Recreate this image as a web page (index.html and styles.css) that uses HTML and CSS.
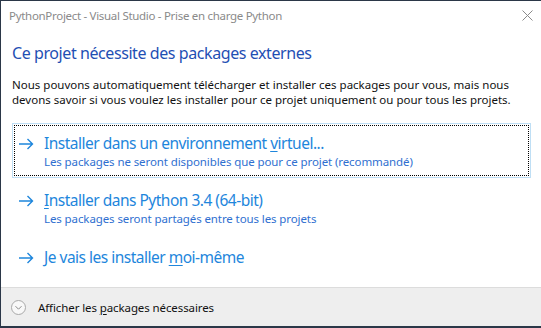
FILE: index.html
```html
<!DOCTYPE html>
<html lang="fr">
<head>
    <meta charset="UTF-8">
    <meta name="viewport" content="width=device-width, initial-scale=1.0">
    <link rel="stylesheet" href="styles.css">
</head>
<body>
    <div class="window">
        <!-- barre de titre -->
        <header class="titlebar">
            <span class="title">PythonProject - Visual Studio - Prise en charge Python</span>
            <button class="close" aria-label="Fermer">
                <svg width="11" height="11" viewBox="0 0 11 11"><path d="M0.5 0.5 L10.5 10.5 M10.5 0.5 L0.5 10.5" stroke="#8a8a8a" stroke-width="1" fill="none"/></svg>
            </button>
        </header>

        <!-- contenu principal -->
        <main class="content">
            <h1 class="heading">Ce projet nécessite des packages externes</h1>
            <p class="intro">Nous pouvons automatiquement télécharger et installer ces packages pour vous, mais nous devons savoir si vous voulez les installer pour ce projet uniquement ou pour tous les projets.</p>

            <ul class="options">
                <li class="option focused">
                    <span class="arrow">
                        <svg width="15" height="12" viewBox="0 0 15 12"><path d="M0 6 H13.5 M8.5 1 L13.5 6 L8.5 11" stroke="#1e86dc" stroke-width="1.4" fill="none"/></svg>
                    </span>
                    <div class="option-text">
                        <div class="option-title">Installer dans un environnement <u>v</u>irtuel...</div>
                        <div class="option-sub">Les packages ne seront disponibles que pour ce projet (recommandé)</div>
                    </div>
                </li>
                <li class="option">
                    <span class="arrow">
                        <svg width="15" height="12" viewBox="0 0 15 12"><path d="M0 6 H13.5 M8.5 1 L13.5 6 L8.5 11" stroke="#1e86dc" stroke-width="1.4" fill="none"/></svg>
                    </span>
                    <div class="option-text">
                        <div class="option-title"><u>I</u>nstaller dans Python 3.4 (64-bit)</div>
                        <div class="option-sub">Les packages seront partagés entre tous les projets</div>
                    </div>
                </li>
                <li class="option">
                    <span class="arrow">
                        <svg width="15" height="12" viewBox="0 0 15 12"><path d="M0 6 H13.5 M8.5 1 L13.5 6 L8.5 11" stroke="#1e86dc" stroke-width="1.4" fill="none"/></svg>
                    </span>
                    <div class="option-text">
                        <div class="option-title">Je vais les installer <u>m</u>oi-même</div>
                    </div>
                </li>
            </ul>
        </main>

        <!-- pied de page -->
        <footer class="details">
            <span class="expander">
                <svg width="15" height="15" viewBox="0 0 15 15"><circle cx="7.5" cy="7.5" r="7" stroke="#a8a8a8" stroke-width="1" fill="#f8f8f8"/><path d="M4.5 6.2 L7.5 9.2 L10.5 6.2" stroke="#8a8a8a" stroke-width="1" fill="none"/></svg>
            </span>
            <span class="details-label">Afficher les <u>p</u>ackages nécessaires</span>
        </footer>
    </div>
</body>
</html>
```

FILE: styles.css
```css
/* base */
body {
    margin: 0;
    padding: 0;
    font-family: "Noto Sans", "Open Sans", sans-serif;
    background-color: #2b3748;
}

.window {
    display: flex;
    flex-direction: column;
    width: 540px;
    height: 325px;
    margin-left: 1px;
    margin-top: 1px;
    background-color: #ffffff;
}

/* barre de titre */
.titlebar {
    display: flex;
    align-items: center;
    justify-content: space-between;
    height: 29px;
    padding-left: 8px;
    padding-right: 8px;
}

.title {
    font-size: 11.5px;
    color: #8a8a8a;
    letter-spacing: -0.3px;
}

.close {
    display: flex;
    border: none;
    background: none;
    padding: 0;
    margin-top: -1px;
}

/* contenu */
.content {
    flex: 1;
    padding: 0 10px 0 11px;
}

.heading {
    margin: 12px 0 0 0;
    font-size: 16px;
    font-weight: normal;
    line-height: 22px;
    color: #1f4fb4;
    letter-spacing: -0.42px;
}

.intro {
    margin: 13px 0 0 0;
    font-size: 11.5px;
    line-height: 15px;
    color: #111111;
}

/* options */
.options {
    list-style: none;
    margin: 16px 0 0 0;
    padding: 0;
}

.option {
    display: flex;
    align-items: flex-start;
    padding: 8px 8px 7px 6px;
    border: 1px solid transparent;
    position: relative;
    margin-bottom: 2px;
}

.option.focused {
    border-color: #bfdff5;
}

.option.focused::after {
    content: "";
    position: absolute;
    top: 1px;
    left: 1px;
    right: 1px;
    bottom: 1px;
    border: 1px dotted #000000;
}

.arrow {
    display: flex;
    width: 25px;
    padding-top: 6px;
    flex-shrink: 0;
}

.option-title {
    font-size: 15.5px;
    line-height: 22px;
    color: #1e86dc;
    letter-spacing: -0.5px;
}

.option-sub {
    font-size: 11.5px;
    line-height: 16px;
    color: #2f6fd0;
    letter-spacing: -0.1px;
}

u {
    text-underline-offset: 2px;
}

/* pied de page */
.details {
    display: flex;
    align-items: center;
    height: 38px;
    padding-left: 10px;
    border-top: 1px solid #dcdcdc;
    background-color: #eeeeee;
}

.expander {
    display: flex;
    width: 27px;
}

.details-label {
    font-size: 11.5px;
    color: #111111;
    letter-spacing: -0.1px;
}
```
